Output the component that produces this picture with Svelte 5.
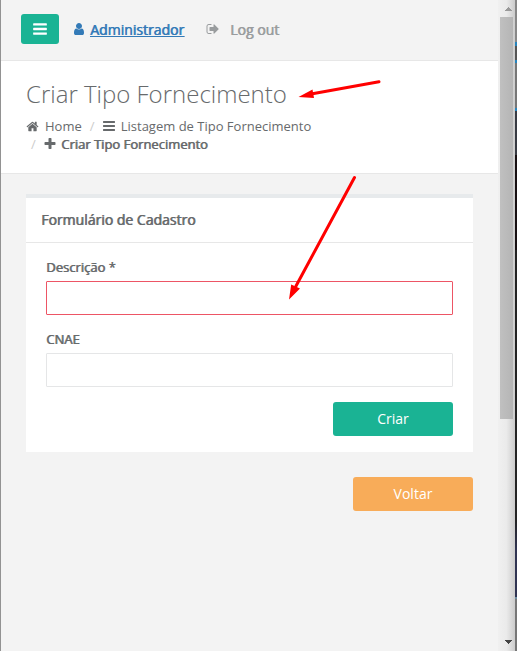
<script>
  const icons = {
    user: 'M1536 1399q0 109-62.5 187t-150.5 78h-854q-88 0-150.5-78t-62.5-187q0-85 8.5-160.5t31.5-152 58.5-131 94-89 134.5-34.5q131 128 313 128t313-128q76 0 134.5 34.5t94 89 58.5 131 31.5 152 8.5 160.5zm-256-887q0 159-112.5 271.5t-271.5 112.5-271.5-112.5-112.5-271.5 112.5-271.5 271.5-112.5 271.5 112.5 112.5 271.5z',
    home: 'M1472 992v480q0 26-19 45t-45 19h-384v-384h-256v384h-384q-26 0-45-19t-19-45v-480q0-1 .5-3t.5-3l575-474 575 474q1 2 1 6zm223-69l-62 74q-8 9-21 11h-3q-13 0-21-7l-692-577-692 577q-12 8-24 7-13-2-21-11l-62-74q-8-10-7-23.5t11-21.5l719-599q32-26 76-26t76 26l244 204v-195q0-14 9-23t23-9h192q14 0 23 9t9 23v408l219 182q10 8 11 21.5t-7 23.5z',
    bars: 'M1664 1344v128q0 26-19 45t-45 19h-1408q-26 0-45-19t-19-45v-128q0-26 19-45t45-19h1408q26 0 45 19t19 45zm0-512v128q0 26-19 45t-45 19h-1408q-26 0-45-19t-19-45v-128q0-26 19-45t45-19h1408q26 0 45 19t19 45zm0-512v128q0 26-19 45t-45 19h-1408q-26 0-45-19t-19-45v-128q0-26 19-45t45-19h1408q26 0 45 19t19 45z',
    plus: 'M1600 736v192q0 40-28 68t-68 28h-416v416q0 40-28 68t-68 28h-192q-40 0-68-28t-28-68v-416h-416q-40 0-68-28t-28-68v-192q0-40 28-68t68-28h416v-416q0-40 28-68t68-28h192q40 0 68 28t28 68v416h416q40 0 68 28t28 68z',
    out: 'M704 1440q0 4 1 20t.5 26.5-3 23.5-10 19.5-20.5 6.5h-320q-119 0-203.5-84.5t-84.5-203.5v-704q0-119 84.5-203.5t203.5-84.5h320q13 0 22.5 9.5t9.5 22.5q0 4 1 20t.5 26.5-3 23.5-10 19.5-20.5 6.5h-320q-66 0-113 47t-47 113v704q0 66 47 113t113 47h312l11.5 1 11.5 3 8 5.5 7 9 2 13.5zm928-544q0 26-19 45l-544 544q-19 19-45 19t-45-19-19-45v-288h-448q-26 0-45-19t-19-45v-384q0-26 19-45t45-19h448v-288q0-26 19-45t45-19 45 19l544 544q19 19 19 45z'
  };
</script>

{#snippet icon(name, cls)}
  <svg class="icon {cls}" viewBox="0 0 1792 1792" aria-hidden="true"><path d={icons[name]} /></svg>
{/snippet}

<div class="window">
  <main>
    <nav>
      <button class="toggle" aria-label="Menu">{@render icon('bars', 'i16')}</button>
      <a class="user" href="#user">{@render icon('user', 'i14')}<span>Administrador</span></a>
      <a class="logout" href="#logout">{@render icon('out', 'i14')}<span>Log out</span></a>
    </nav>
    <header>
      <h1><span>Criar Tipo Fornecimento</span></h1>
      <ol>
        <li>{@render icon('home', 'i13')}<span class="home">Home</span></li>
        <li><i>/</i>{@render icon('bars', 'i14')}<span class="list">Listagem de Tipo Fornecimento</span></li>
      </ol>
      <ol>
        <li class="current"><i>/</i>{@render icon('plus', 'i14')}<strong>Criar Tipo Fornecimento</strong></li>
      </ol>
    </header>
    <section class="card">
      <h2><span>Formulário de Cadastro</span></h2>
      <form>
        <label for="desc"><span>Descrição *</span></label>
        <input id="desc" class="error" />
        <label for="cnae"><span>CNAE</span></label>
        <input id="cnae" />
        <button type="button" class="btn create">Criar</button>
      </form>
    </section>
    <button class="btn back">Voltar</button>
  </main>
  <div class="scroll">
    <svg class="up" viewBox="0 0 7 4"><path d="M3 0h1v1h1v1h1v1h1v1H0V3h1V2h1V1h1z" /></svg>
    <div class="thumb"></div>
    <svg class="down" viewBox="0 0 7 4"><path d="M0 0h7v1H6v1H5v1H4v1H3V3H2V2H1V1H0z" /></svg>
  </div>
  <div class="edge"></div>
  <svg class="arrows" viewBox="0 0 517 651">
    <path class="line" d="M379 81.700 311 94M354.500 177.500 296 286" />
    <path d="M298.500 97 312.500 89.500 314 98zM289 299.500 291.200 284.500 300 288.500z" />
  </svg>
</div>

<style>
  :global(body) { margin: 0; overflow: hidden; }
  .window {
    position: relative;
    display: flex;
    box-sizing: border-box;
    width: 517px;
    height: 651px;
    border-left: 1px solid #929292;
    background: #f3f3f4;
    color: #676a6c;
    font: 13px/18px "Open Sans", sans-serif;
  }
  main { width: 497px; background: #f3f3f3; }
  .icon { display: block; flex: none; fill: currentColor; }
  .i13 { width: 13px; height: 13px; }
  .i14 { width: 14px; height: 14px; }
  .i16 { width: 16px; height: 16px; }
  nav {
    display: flex;
    align-items: center;
    box-sizing: border-box;
    height: 61px;
    padding: 0 0 2px 20px;
    border-bottom: 1px solid #e7e7e7;
    font-size: 14px;
  }
  nav span, strong, h2, label { font-weight: 400; text-shadow: 0.7px 0 currentColor; }
  nav span { padding-top: 2px; }
  button { border: 0; font-family: inherit; }
  .toggle {
    display: flex;
    align-items: center;
    justify-content: center;
    width: 38px;
    height: 30px;
    padding: 0;
    border-radius: 3px;
    background: #1ab394;
    color: #fff;
  }
  nav a { display: flex; align-items: center; text-decoration: none; }
  .user { margin-left: 13px; color: #337ab7; }
  .user span { width: 94px; margin-left: 4px; text-decoration: underline; }
  .logout { margin-left: 22px; color: #999c9e; }
  .logout span { margin-left: 10px; }
  header {
    box-sizing: border-box;
    height: 113px;
    padding: 20px 0 0 25px;
    border-bottom: 1px solid #e7e7e7;
    background: #fff;
  }
  h1 { margin: 0 0 10px; font-size: 24px; line-height: 26px; font-weight: 300; }
  ol { display: flex; margin: 0; padding: 0; list-style: none; }
  li { display: flex; align-items: center; white-space: nowrap; }
  li i { width: 6px; margin: 0 6px 0 8px; color: #ccc; font-style: normal; }
  .home { margin-left: 6px; }
  .list { margin-left: 5px; }
  li.current i { margin: 0 6px 0 5px; }
  .current strong { margin-left: 4px; }
  .card {
    box-sizing: border-box;
    width: 447px;
    height: 258px;
    margin: 20px 0 0 25px;
    border-top: 4px solid #e7eaec;
    background: #fff;
  }
  h2 {
    margin: 0;
    padding: 13px 15px;
    border-bottom: 1px solid #e7e7e7;
    font-size: 14px;
    line-height: 18px;
  }
  form { display: flex; flex-direction: column; padding: 15px 20px; }
  label { margin-bottom: 5px; line-height: 18px; }
  input {
    box-sizing: border-box;
    height: 34px;
    margin: 0 0 15px;
    border: 1px solid #e5e6e7;
    border-radius: 1px;
    background: #fff;
  }
  .error { border-color: #ed5565; }
  .btn {
    display: block;
    width: 120px;
    height: 34px;
    padding: 0 0 1px;
    border-radius: 3px;
    color: #fff;
    font-size: 14px;
  }
  .create { align-self: flex-end; background: #1ab394; }
  .back { margin: 25px 0 0 352px; background: #f8ac59; }
  .scroll {
    display: flex;
    flex-direction: column;
    box-sizing: border-box;
    width: 17px;
    padding: 7px 2px 7px;
    background: linear-gradient(90deg, #f0f0f0, #eaeaea 50%, #ccc);
  }
  .scroll svg { width: 7px; height: 4px; margin-left: 5px; }
  .up { fill: #999; }
  .down { margin-top: auto; fill: #444; }
  .thumb { width: 13px; height: 402px; margin-top: 6px; background: linear-gradient(90deg, #c0c0c0, #b5b5b5); }
  .edge {
    width: 2px;
    background: linear-gradient(#888 0 42px, #2684bd 42px 46px, #555 46px 60px, #2684bd 60px 63px, #777 63px 108px, #2684bd 108px 111px, #383b43 111px 155px, #171012 155px 250px, #242424 250px 520px, #303452 550px 597px, #6b8ba0 597px 599px, #777 599px);
  }
  .arrows { position: absolute; top: 0; left: -1px; width: 517px; height: 651px; pointer-events: none; fill: red; }
  .line { fill: none; stroke: red; stroke-width: 3; stroke-linecap: round; }
</style>
